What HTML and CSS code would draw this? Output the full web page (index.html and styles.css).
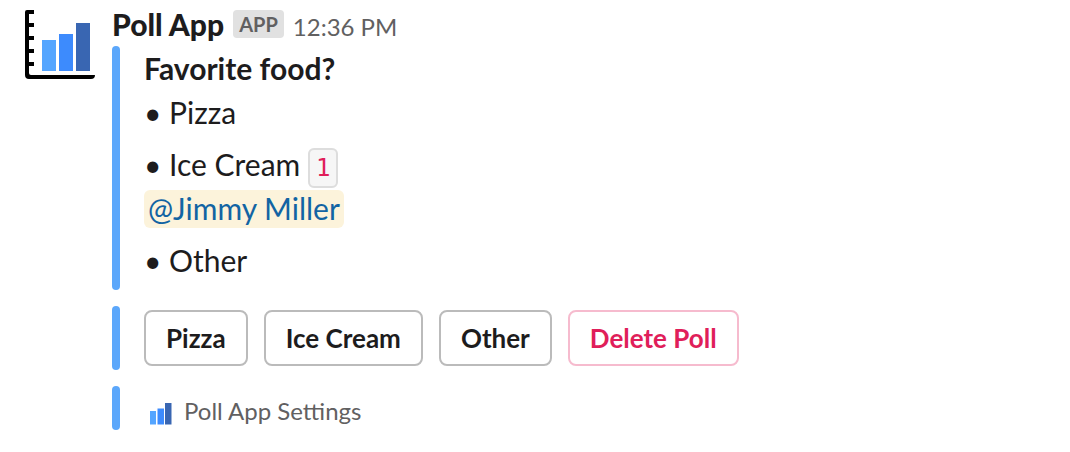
FILE: index.html
```html
<!DOCTYPE html>
<html lang="en">
<head>
  <meta charset="utf-8">
  <meta name="viewport" content="width=device-width, initial-scale=1">
  <title>Poll App</title>
  <link rel="stylesheet" href="styles.css">
</head>
<body>
  <article class="message">
    <svg class="avatar" viewBox="0 0 72 72" aria-hidden="true">
      <path d="M3 0H10V4H5V63Q5 65 7 65H71Q71 69 67 69H5Q1 69 1 65V2Q1 0 3 0Z" fill="#000"/>
      <path d="M4 15H10M4 28H10M4 41H10M4 54H10" stroke="#000" stroke-width="4"/>
      <path d="M18 30H32V61H18Z" fill="#54a5ff"/>
      <path d="M35 24H49V61H35Z" fill="#3d8bfd"/>
      <path d="M52 13H66V61H52Z" fill="#3966b2"/>
    </svg>
    <div class="body">
      <header class="header">
        <span class="name">Poll App</span>
        <span class="badge">APP</span>
        <time class="time">12:36 PM</time>
      </header>
      <div class="attachments">
        <section class="block poll">
          <h2 class="question">Favorite food?</h2>
          <p class="option">• Pizza</p>
          <div class="option">
            <p class="line">• Ice Cream <code class="count">1</code></p>
            <p class="line"><a class="mention" href="#jimmy">@Jimmy Miller</a></p>
          </div>
          <p class="option">• Other</p>
        </section>
        <section class="block actions">
          <button class="button" type="button">Pizza</button>
          <button class="button" type="button">Ice Cream</button>
          <button class="button" type="button">Other</button>
          <button class="button danger" type="button">Delete Poll</button>
        </section>
        <section class="block context">
          <svg class="icon" viewBox="0 0 32 32" aria-hidden="true">
            <path d="M6 16H12V29.500H6Z" fill="#54a5ff"/>
            <path d="M13.500 13.500H20V29.500H13.500Z" fill="#3d8bfd"/>
            <path d="M21 8H27.500V29.500H21Z" fill="#3966b2"/>
          </svg>
          <span>Poll App Settings</span>
        </section>
      </div>
    </div>
  </article>
</body>
</html>
```
FILE: styles.css
```css
* {
  box-sizing: border-box;
}

body {
  margin: 0;
  background: #fff;
  color: #1d1c1d;
  font-family: Lato, "Liberation Sans", sans-serif;
  font-size: 30px;
  line-height: 44px;
}

h2,
p {
  margin: 0;
  font-size: inherit;
}

.message {
  display: flex;
  gap: 16px;
  padding: 2px 24px 16px;
}

.avatar {
  flex: none;
  width: 72px;
  height: 72px;
  margin-top: 8px;
}

.body {
  flex: 1;
  min-width: 0;
}

.header {
  display: flex;
  align-items: baseline;
  gap: 9px;
  height: 44px;
}

.name {
  font-weight: 900;
}

.badge {
  align-self: center;
  padding: 0 6px;
  border-radius: 4px;
  background: #e1e1e1;
  color: #616061;
  font-size: 20px;
  font-weight: 700;
  line-height: 28px;
}

.time {
  color: #616061;
  font-size: 24px;
}

.attachments {
  display: flex;
  flex-direction: column;
  gap: 16px;
}

.block {
  position: relative;
  padding-left: 32px;
}

.block::before {
  content: "";
  position: absolute;
  top: 0;
  bottom: 0;
  left: 0;
  width: 8px;
  border-radius: 4px;
  background: #5ba7fb;
}

.poll {
  display: flex;
  flex-direction: column;
  gap: 8px;
  padding-bottom: 8px;
}

.question {
  margin-bottom: -8px;
  font-weight: 700;
}

.line {
  height: 44px;
}

.count {
  padding: 4px 6px;
  border: 2px solid #dddddd;
  border-radius: 6px;
  background: #f6f6f6;
  color: #e01e5a;
  font-family: "DejaVu Sans Mono", monospace;
  font-size: 24px;
  line-height: 32px;
}

.mention {
  padding: 0 4px 2px;
  border-radius: 6px;
  background: #fcf3db;
  color: #1264a3;
  text-decoration: none;
}

.actions {
  display: flex;
  flex-wrap: wrap;
  gap: 16px;
  padding-top: 4px;
  padding-bottom: 4px;
}

.button {
  height: 56px;
  padding: 0 20px;
  border: 2px solid #bbbbbb;
  border-radius: 8px;
  background: #fff;
  color: #1d1c1d;
  font-family: inherit;
  font-size: 26px;
  font-weight: 700;
  cursor: pointer;
}

.danger {
  border-color: #f6bbce;
  color: #e01e5a;
}

.context {
  display: flex;
  align-items: center;
  gap: 8px;
  padding-top: 6px;
  color: #616061;
  font-size: 24px;
  line-height: 38px;
}

.icon {
  flex: none;
  width: 32px;
  height: 32px;
}
```
